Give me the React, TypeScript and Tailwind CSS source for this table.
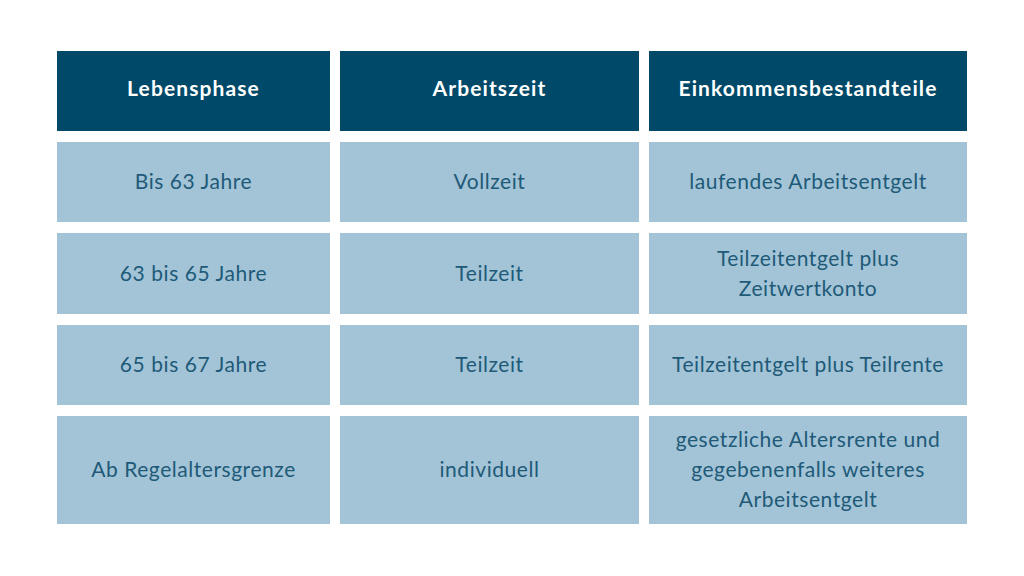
import React from "react";

const header = ["Lebensphase", "Arbeitszeit", "Einkommensbestandteile"];
const rows: string[][][] = [
  [["Bis 63 Jahre"], ["Vollzeit"], ["laufendes Arbeitsentgelt"]],
  [["63 bis 65 Jahre"], ["Teilzeit"], ["Teilzeitentgelt plus", "Zeitwertkonto"]],
  [["65 bis 67 Jahre"], ["Teilzeit"], ["Teilzeitentgelt plus Teilrente"]],
  [["Ab Regelaltersgrenze"], ["individuell"], ["gesetzliche Altersrente und", "gegebenenfalls weiteres", "Arbeitsentgelt"]],
];

export default function App() {
  return (
    <div
      className="w-[1024px] h-[576px] bg-white pt-[51px] pl-[57px]"
      style={{ fontFamily: "Lato, 'Noto Sans', sans-serif" }}
    >
      <div className="grid grid-cols-[273px_299px_318px] grid-rows-[80px_80px_81px_80px_108px] gap-x-[10px] gap-y-[11px] w-fit">
        {header.map((h) => (
          <div
            key={h}
            className="bg-[#004968] text-white font-bold text-[21px] tracking-[1.1px] flex items-center justify-center pb-[6px]"
          >
            {h}
          </div>
        ))}
        {rows.map((r, i) =>
          r.map((c, j) => (
            <div
              key={`${i}-${j}`}
              className="bg-[#a3c4d7] text-[#205a78] text-[21px] tracking-[0.55px] leading-[30px] flex flex-col items-center justify-center text-center pb-[2px]"
            >
              {c.map((line) => (
                <span key={line}>{line}</span>
              ))}
            </div>
          ))
        )}
      </div>
    </div>
  );
}
